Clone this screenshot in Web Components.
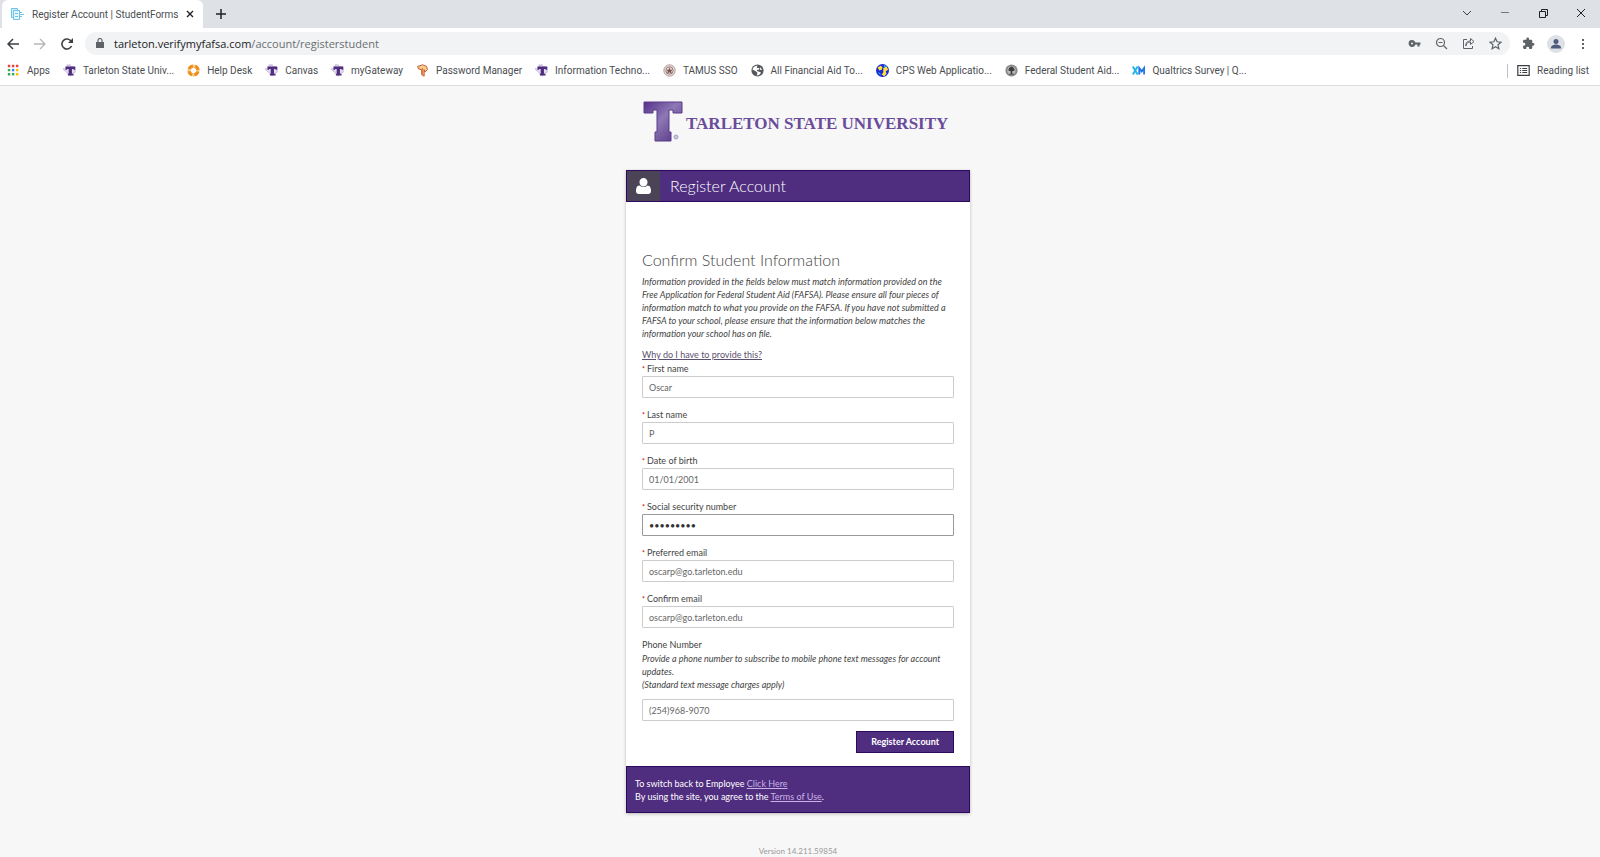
<!DOCTYPE html>
<html lang="en">
<head>
<meta charset="utf-8">
<title>Register Account | StudentForms</title>
<style>
    body {
        margin: 0;
        background: #f7f7f7;
        font-family: Lato, "Open Sans", sans-serif;
    }
</style>
</head>
<body>
<browser-window>
    <browser-tab slot="tabs">Register Account | StudentForms</browser-tab>
    <address-bar slot="address" host="tarleton.verifymyfafsa.com" path="/account/registerstudent"></address-bar>
    <book-mark slot="bookmarks" icon="apps">Apps</book-mark>
    <book-mark slot="bookmarks" icon="tarleton">Tarleton State Univ...</book-mark>
    <book-mark slot="bookmarks" icon="help">Help Desk</book-mark>
    <book-mark slot="bookmarks" icon="tarleton">Canvas</book-mark>
    <book-mark slot="bookmarks" icon="tarleton">myGateway</book-mark>
    <book-mark slot="bookmarks" icon="password">Password Manager</book-mark>
    <book-mark slot="bookmarks" icon="tarleton">Information Techno...</book-mark>
    <book-mark slot="bookmarks" icon="seal">TAMUS SSO</book-mark>
    <book-mark slot="bookmarks" icon="globe">All Financial Aid To...</book-mark>
    <book-mark slot="bookmarks" icon="cps">CPS Web Applicatio...</book-mark>
    <book-mark slot="bookmarks" icon="federal">Federal Student Aid...</book-mark>
    <book-mark slot="bookmarks" icon="xm">Qualtrics Survey | Q...</book-mark>
    <book-mark slot="reading" icon="list">Reading list</book-mark>
</browser-window>
<register-page>
    <university-logo slot="logo"></university-logo>
    <account-card heading="Register Account">
        <register-form></register-form>
        <span slot="footer">To switch back to Employee <foot-link>Click Here</foot-link></span>
        <span slot="footer">By using the site, you agree to the <foot-link>Terms of Use</foot-link>.</span>
    </account-card>
    <span slot="version">Version 14.211.59854</span>
</register-page>

<script>
const bookmarkIcons = {
    apps: `<g>
        <path fill="#e8453c" d="M1 1h3v3H1zM6 1h3v3H6zM11 1h3v3h-3z"/>
        <path fill="#34a853" d="M1 6h3v3H1zM1 11h3v3H1z"/><path fill="#4285f4" d="M6 6h3v3H6z"/>
        <path fill="#fbbc04" d="M11 6h3v3h-3zM11 11h3v3h-3z"/><path fill="#34a853" d="M6 11h3v3H6z"/></g>`,
    tarleton: `<path fill="#e4dcee" stroke="#b7a6d0" stroke-width=".8" d="M5 1h4v2l6 1v6l-4 2-2 3-3-3-2-2-4-4h5z"/><path fill="#4f2d7f" d="M3 3h12v4h-2V6h-2v6h2v2H6v-2h1V6H5v1H3z"/>`,
    help: `<circle cx="8" cy="8" r="5.500" fill="none" stroke="#f7c98a" stroke-width="4"/><circle cx="8" cy="8" r="5.500" fill="none" stroke="#ee8f1c" stroke-width="4" stroke-dasharray="5.640 3" stroke-dashoffset="-1.500"/>`,
    password: `<path fill="#fbd08a" stroke="#c2553a" stroke-width="1.200" d="M2 3l6-2 5 2 1 4-3 3-1-3v8l-3-2V7L3 6z"/><path stroke="#e8742e" stroke-width="1.500" d="M8 5v9"/>`,
    seal: `<circle cx="8" cy="8" r="7" fill="#e6d9d6" stroke="#a58b88"/><circle cx="8" cy="8" r="4.500" fill="none" stroke="#8c6f6c"/><path fill="#7b5552" d="M8 4l1 3h3l-2 2 1 3-3-2-3 2 1-3-2-2h3z"/>`,
    globe: `<circle cx="8" cy="8" r="7.500" fill="#55585c"/><path fill="#fff" d="M2 7c0-3 3-5 6-5L7 5h3v2H7l1 2 4 1c0 3-3 4-5 4l1-3-2-2zM11 4l3 3-3 0z"/>`,
    cps: `<circle cx="8" cy="8" r="8" fill="#1a2ad6"/><path fill="#ffe03a" d="M2 4l4-2 2 2-1 3-3 1zM9 5l4-2 2 4-3 2 1 3-3 3-3-2 2-3z"/><path fill="#27c3e8" d="M10 1l3 2-3 1zM2 10l3 1 1 3z"/>`,
    federal: `<circle cx="8" cy="8" r="7.500" fill="#8a8a8a"/><circle cx="8" cy="8" r="5" fill="#bdbdbd"/><path fill="#3d3d3d" d="M8 3l3 2 1 3-3 1v3h2v1H5v-1h2V9L4 8l1-3z"/>`,
    xm: `<path fill="none" stroke="#21b6e8" stroke-width="2.400" d="M1 3l6 10M7 3l-6 10"/><path fill="none" stroke="#2377e6" stroke-width="2.400" d="M9 13V5l3 4 3-4v8"/>`,
    list: `<path fill="none" stroke="#3c4043" stroke-width="1.500" d="M1 2h14v12H1z"/><path stroke="#3c4043" stroke-width="1.300" d="M3.500 5.500H5M6.500 5.500h6M3.500 8H5M6.500 8h6M3.500 10.500H5M6.500 10.500h6"/>`
};

// Browser chrome: tab strip, toolbar and bookmark bar
const windowTemplate = document.createElement('template');
windowTemplate.innerHTML = `
    <style>
        :host {
            display: block;
            background: #fff;
            border-bottom: 1px solid #dcdddf;
            color: #3c4043;
            font-family: "Open Sans", sans-serif;
        }
        svg { display: block; fill: none; stroke: #5f6368; stroke-width: 2; }
        button { border: 0; padding: 0; background: none; }
        .strip {
            display: flex;
            align-items: center;
            height: 28px;
            background: #dee1e6;
        }
        .plus { margin-left: 12px; }
        .controls {
            display: flex;
            gap: 28px;
            margin-left: auto;
            padding-right: 14px;
        }
        .toolbar {
            display: flex;
            align-items: center;
            height: 31px;
            padding: 0 11px 0 7px;
        }
        .nav { display: flex; gap: 15px; margin-right: 12px; }
        ::slotted(address-bar) { flex: 1; }
        .tools { display: flex; align-items: center; gap: 12px; margin-left: 12px; }
        .bookmarks {
            display: flex;
            align-items: center;
            height: 23px;
            padding: 0 11px 3px 7px;
            gap: 13px;
        }
        .reading { margin-left: auto; padding-left: 9px; border-left: 1px solid #bdc1c6; }
    </style>
    <div class="strip">
        <slot name="tabs"></slot>
        <button class="plus" aria-label="New tab"><svg width="12" height="12" viewBox="0 0 12 12"><path stroke="#202124" stroke-width="1.500" d="M6 1v10M1 6h10"/></svg></button>
        <div class="controls">
            <button aria-label="Search tabs"><svg width="10" height="10" viewBox="0 0 10 10"><path stroke="#3c4043" stroke-width="1" d="M1 2l4 4 4-4"/></svg></button>
            <button aria-label="Minimize"><svg width="10" height="10" viewBox="0 0 10 10"><path stroke="#777" stroke-width="1" d="M1 3.500h8"/></svg></button>
            <button aria-label="Restore"><svg width="10" height="10" viewBox="0 0 10 10"><path stroke="#202124" stroke-width="1" d="M1.500 2.500h6v6h-6zM3.500 2V.5h6v6H8"/></svg></button>
            <button aria-label="Close"><svg width="10" height="10" viewBox="0 0 10 10"><path stroke="#202124" stroke-width="1" d="M1 0l8 8M9 0L1 8"/></svg></button>
        </div>
    </div>
    <div class="toolbar">
        <div class="nav">
            <button aria-label="Back"><svg width="12" height="12" viewBox="0 0 12 12"><path stroke-width="1.500" stroke="#3c4043" d="M12 6H1M6 1L1 6l5 5"/></svg></button>
            <button aria-label="Forward"><svg width="12" height="12" viewBox="0 0 12 12"><path stroke-width="1.300" stroke="#b4b6b9" d="M0 6h11M6 1l5 5-5 5"/></svg></button>
            <button aria-label="Reload"><svg width="12" height="12" viewBox="0 0 12 12"><path stroke-width="1.600" stroke="#3c4043" d="M10.500 8A5 5 0 1 1 9.500 2.500L11 4"/><path fill="#3c4043" stroke="none" d="M12 0v5H7z"/></svg></button>
        </div>
        <slot name="address"></slot>
        <div class="tools">
            <button aria-label="Extensions"><svg width="13" height="13" viewBox="0 0 24 24"><path fill="#5f6368" stroke="none" d="M20.500 11H19V7a2 2 0 0 0-2-2h-4V3.500a2.500 2.500 0 0 0-5 0V5H4a2 2 0 0 0-2 2v3.800h1.500a2.700 2.700 0 0 1 0 5.400H2V20a2 2 0 0 0 2 2h3.800v-1.500a2.700 2.700 0 0 1 5.400 0V22H17a2 2 0 0 0 2-2v-4h1.500a2.500 2.500 0 0 0 0-5z"/></svg></button>
            <button aria-label="Profile"><svg width="18" height="18" viewBox="0 0 18 18"><circle cx="9" cy="9" r="9" fill="#dee1e6" stroke="none"/><circle cx="9" cy="6.500" r="2.500" fill="#4f5b7c" stroke="none"/><path fill="#4f5b7c" stroke="none" d="M4 13.500v-1c0-2 3-3 5-3s5 1 5 3v1z"/></svg></button>
            <button aria-label="Menu"><svg width="12" height="12" viewBox="0 0 12 12"><path fill="#5f6368" stroke="none" d="M5 1h2v2H5zM5 5h2v2H5zM5 9h2v2H5z"/></svg></button>
        </div>
    </div>
    <div class="bookmarks">
        <slot name="bookmarks"></slot>
        <div class="reading"><slot name="reading"></slot></div>
    </div>
`;
class BrowserWindow extends HTMLElement {
    constructor() {
        super();
        this.attachShadow({ mode: 'open' });
        this.shadowRoot.appendChild(windowTemplate.content.cloneNode(true));
    }
}

const tabTemplate = document.createElement('template');
tabTemplate.innerHTML = `
    <style>
        :host {
            display: flex;
            align-items: center;
            align-self: stretch;
            box-sizing: border-box;
            margin-left: 2px;
            padding: 0 9px;
            border-radius: 6px 6px 0 0;
            background: #fff;
            color: #4a4d51;
            font-family: Roboto, sans-serif;
            font-size: 10px;
            white-space: nowrap;
        }
        svg { display: block; }
        .favicon { margin-right: 8px; }
        button { border: 0; padding: 0; margin-left: 8px; background: none; }
    </style>
    <svg class="favicon" width="13" height="13" viewBox="0 0 13 13"><g fill="none" stroke="#6cc3ea"><path fill="#d8effa" d="M.5.500h6v9h-6z"/><path fill="#e9f6fc" d="M2.500 2.500h6v9h-6z"/><path d="M4 5.500h3M4 8.500h3M9 4.500h2M9 6.500h4M9 8.500h2"/></g></svg>
    <slot></slot>
    <button aria-label="Close tab"><svg width="8" height="8" viewBox="0 0 8 8"><path stroke="#202124" stroke-width="1.400" d="M1 1l6 6M7 1L1 7"/></svg></button>
`;
class BrowserTab extends HTMLElement {
    constructor() {
        super();
        this.attachShadow({ mode: 'open' });
        this.shadowRoot.appendChild(tabTemplate.content.cloneNode(true));
    }
}

const addressTemplate = document.createElement('template');
addressTemplate.innerHTML = `
    <style>
        :host {
            display: flex;
            align-items: center;
            height: 23px;
            padding: 0 8px 0 11px;
            border-radius: 12px;
            background: #f1f3f4;
            color: #6b6e72;
            font-size: 11px;
        }
        svg { display: block; fill: none; stroke: #5f6368; stroke-width: 2; }
        .lock { margin-right: 10px; }
        .host { color: #202124; }
        .actions { display: flex; gap: 14px; margin-left: auto; }
        button { border: 0; padding: 0; background: none; }
    </style>
    <svg class="lock" width="8" height="11" viewBox="0 0 8 11"><path fill="#5f6368" stroke="none" d="M0 4h8v6H0z"/><path stroke-width="1.200" d="M2 4.500V2.500a2 2 0 0 1 4 0v2"/></svg>
    <span class="host"></span><span class="path"></span>
    <div class="actions">
        <button aria-label="Passwords"><svg width="13" height="13" viewBox="0 0 13 13"><circle cx="4" cy="6.500" r="2.200" stroke-width="2.400"/><path stroke-width="2.200" d="M6 6.500h6.500M10.500 6.500v3"/></svg></button>
        <button aria-label="Zoom"><svg width="13" height="13" viewBox="0 0 13 13"><circle cx="5.500" cy="5.500" r="4" stroke-width="1.200"/><path stroke-width="1.200" d="M8.500 8.500L12 12M3.500 5.500h4"/></svg></button>
        <button aria-label="Share"><svg width="13" height="13" viewBox="0 0 13 13"><path stroke-width="1" d="M5 2.500H1.500v9h9V9M4 9c0-3 2-4 4.500-4V7.500L12 4.500 8.500 1.500V4C5 4 3.500 6 4 9z"/></svg></button>
        <button aria-label="Bookmark"><svg width="13" height="13" viewBox="0 0 13 13"><path stroke-width="1.200" d="M6.500 1.200l1.600 3.600 3.900.4-3 2.600.9 3.900-3.400-2-3.400 2 .9-3.900-3-2.600 3.900-.4z"/></svg></button>
    </div>
`;
class AddressBar extends HTMLElement {
    constructor() {
        super();
        this.attachShadow({ mode: 'open' });
        this.shadowRoot.appendChild(addressTemplate.content.cloneNode(true));
    }

    connectedCallback() {
        this.shadowRoot.querySelector('.host').textContent = this.getAttribute('host');
        this.shadowRoot.querySelector('.path').textContent = this.getAttribute('path');
    }
}

const bookmarkTemplate = document.createElement('template');
bookmarkTemplate.innerHTML = `
    <style>
        :host { display: block; }
        a {
            display: flex;
            align-items: center;
            gap: 7px;
            color: #4a4d51;
            font-family: Roboto, sans-serif;
            font-size: 10px;
            line-height: 14px;
            text-decoration: none;
            white-space: nowrap;
        }
    </style>
    <a href="#"><svg width="13" height="13" viewBox="0 0 16 16"></svg><slot></slot></a>
`;
class BookMark extends HTMLElement {
    constructor() {
        super();
        this.attachShadow({ mode: 'open' });
        this.shadowRoot.appendChild(bookmarkTemplate.content.cloneNode(true));
    }

    connectedCallback() {
        this.shadowRoot.querySelector('svg').innerHTML = bookmarkIcons[this.getAttribute('icon')];
    }
}

// Centred column that holds the logo, the card and the version line
const pageTemplate = document.createElement('template');
pageTemplate.innerHTML = `
    <style>
        :host { display: block; padding: 14px 4px 0 0; }
        main { max-width: 344px; margin: 0 auto; }
        .logo { padding: 0 16px 28px; }
        .version {
            padding-top: 31px;
            color: #9a9a9a;
            font-size: 8px;
            line-height: 14px;
            text-align: center;
        }
    </style>
    <main>
        <div class="logo"><slot name="logo"></slot></div>
        <slot></slot>
        <div class="version"><slot name="version"></slot></div>
    </main>
`;
class RegisterPage extends HTMLElement {
    constructor() {
        super();
        this.attachShadow({ mode: 'open' });
        this.shadowRoot.appendChild(pageTemplate.content.cloneNode(true));
    }
}

const logoTemplate = document.createElement('template');
logoTemplate.innerHTML = `
    <style>
        :host {
            display: flex;
            align-items: center;
            gap: 2px;
            color: #6a4c9a;
            font-family: "Liberation Serif", serif;
            font-size: 17px;
            font-weight: bold;
            white-space: nowrap;
        }
        svg { flex: none; }
        span { padding-top: 6px; }
    </style>
    <svg width="42" height="42" viewBox="0 0 42 42">
        <defs><linearGradient id="t" x1="0" y1="0" x2="1" y2="1"><stop offset="0" stop-color="#55318a"/><stop offset=".45" stop-color="#8d78b5"/><stop offset="1" stop-color="#4f2d7f"/></linearGradient></defs>
        <path fill="url(#t)" stroke="#5a3a8c" d="M2 2h38v11h-9v-3h-4v22h2v9H13v-9h2V10h-4v3H2z"/>
        <circle cx="34" cy="37" r="2" fill="#cfc6de" stroke="#a99bc6"/>
    </svg>
    <span>TARLETON STATE UNIVERSITY</span>
`;
class UniversityLogo extends HTMLElement {
    constructor() {
        super();
        this.attachShadow({ mode: 'open' });
        this.shadowRoot.appendChild(logoTemplate.content.cloneNode(true));
    }
}

const cardTemplate = document.createElement('template');
cardTemplate.innerHTML = `
    <style>
        :host {
            display: block;
            background: #fff;
            box-shadow: 0 1px 3px rgba(0, 0, 0, .25);
        }
        header {
            display: flex;
            box-sizing: border-box;
            height: 32px;
            border: 1px solid #2d0a5f;
            background: #4f2d7f;
            color: #fff;
        }
        .icon {
            display: grid;
            place-items: center;
            width: 33px;
            background: #4b4456;
        }
        h1 {
            margin: 0 0 0 10px;
            font-size: 16px;
            font-weight: 300;
            line-height: 30px;
        }
        .body { padding: 46px 16px 13px; }
        footer {
            display: flex;
            flex-direction: column;
            padding: 10px 8px 9px;
            border: 1px solid #2d0a5f;
            background: #4f2d7f;
            color: #fff;
            font-size: 9px;
            line-height: 13px;
        }
    </style>
    <header>
        <div class="icon"><svg width="15" height="16" viewBox="0 0 15 16"><path fill="#fff" d="M7.500 0a4 4 0 0 1 4 4.200C11.500 7 9.500 8.500 7.500 8.500s-4-1.500-4-4.300A4 4 0 0 1 7.500 0zM3.500 7.500c2.500 2 5.500 2 8 0 2.800 0 3.500 3 3.500 5.500 0 2-1 3-3 3H3c-2 0-3-1-3-3 0-2.500.7-5.500 3.500-5.500z"/></svg></div>
        <h1></h1>
    </header>
    <div class="body"><slot></slot></div>
    <footer><slot name="footer"></slot></footer>
`;
class AccountCard extends HTMLElement {
    constructor() {
        super();
        this.attachShadow({ mode: 'open' });
        this.shadowRoot.appendChild(cardTemplate.content.cloneNode(true));
    }

    connectedCallback() {
        this.shadowRoot.querySelector('h1').textContent = this.getAttribute('heading');
    }
}

// No white space after the link, a full stop may follow it
const footLinkTemplate = document.createElement('template');
footLinkTemplate.innerHTML = `
    <style>
        :host { display: inline; }
        a { color: #c9b3e6; }
    </style><a href="#"><slot></slot></a>`;
class FootLink extends HTMLElement {
    constructor() {
        super();
        this.attachShadow({ mode: 'open' });
        this.shadowRoot.appendChild(footLinkTemplate.content.cloneNode(true));
    }
}

// Labelled text box, the slot takes the hint under the label
const fieldTemplate = document.createElement('template');
fieldTemplate.innerHTML = `
    <style>
        :host { display: block; margin-bottom: 10px; }
        label { display: block; color: #444; line-height: 14px; }
        :host([required]) label::before {
            content: "*";
            margin-right: 2px;
            color: #c00;
            font-size: 7px;
        }
        input {
            display: block;
            box-sizing: border-box;
            width: 100%;
            height: 22px;
            padding: 0 6px;
            border: 1px solid #ccc;
            border-radius: 1px;
            background: #fff;
            color: #666;
            font: inherit;
        }
        input[type="password"] { color: #333; }
        :host([active]) input { border-color: #999; }
        ::slotted(p) { margin: 0 0 8px; font-style: italic; line-height: 13px; }
    </style>
    <label for="box"></label>
    <slot></slot>
    <input id="box">
`;
class FormField extends HTMLElement {
    constructor() {
        super();
        this.attachShadow({ mode: 'open' });
        this.shadowRoot.appendChild(fieldTemplate.content.cloneNode(true));
    }

    connectedCallback() {
        const input = this.shadowRoot.querySelector('input');
        this.shadowRoot.querySelector('label').textContent = this.getAttribute('label');
        input.type = this.getAttribute('type') || 'text';
        input.value = this.getAttribute('value');
    }
}

const formTemplate = document.createElement('template');
formTemplate.innerHTML = `
    <style>
        :host { display: block; color: #444; font-size: 9px; }
        h2 {
            margin: 0 0 3px;
            font-size: 16px;
            font-weight: 300;
            line-height: 24px;
        }
        .intro { margin: 0 0 8px; font-style: italic; line-height: 13px; }
        .why { display: block; width: fit-content; color: #5c5070; line-height: 14px; }
        button {
            display: block;
            height: 22px;
            margin-left: auto;
            padding: 0 14px 2px;
            border: 1px solid #2d0a5f;
            background: #4f2d7f;
            color: #fff;
            font: inherit;
            font-weight: bold;
        }
    </style>
    <form>
        <h2>Confirm Student Information</h2>
        <p class="intro">Information provided in the fields below must match information provided on the Free Application for Federal Student Aid (FAFSA). Please ensure all four pieces of information match to what you provide on the FAFSA. If you have not submitted a FAFSA to your school, please ensure that the information below matches the information your school has on file.</p>
        <a class="why" href="#">Why do I have to provide this?</a>
        <form-field required label="First name" value="Oscar"></form-field>
        <form-field required label="Last name" value="P"></form-field>
        <form-field required label="Date of birth" value="01/01/2001"></form-field>
        <form-field required active label="Social security number" type="password" value="123456789"></form-field>
        <form-field required label="Preferred email" type="email" value="oscarp@go.tarleton.edu"></form-field>
        <form-field required label="Confirm email" type="email" value="oscarp@go.tarleton.edu"></form-field>
        <form-field label="Phone Number" type="tel" value="(254)968-9070">
            <p>Provide a phone number to subscribe to mobile phone text messages for account updates.<br>(Standard text message charges apply)</p>
        </form-field>
        <button type="button">Register Account</button>
    </form>
`;
class RegisterForm extends HTMLElement {
    constructor() {
        super();
        this.attachShadow({ mode: 'open' });
        this.shadowRoot.appendChild(formTemplate.content.cloneNode(true));
    }
}

customElements.define('browser-window', BrowserWindow);
customElements.define('browser-tab', BrowserTab);
customElements.define('address-bar', AddressBar);
customElements.define('book-mark', BookMark);
customElements.define('register-page', RegisterPage);
customElements.define('university-logo', UniversityLogo);
customElements.define('account-card', AccountCard);
customElements.define('foot-link', FootLink);
customElements.define('form-field', FormField);
customElements.define('register-form', RegisterForm);
</script>
</body>
</html>
